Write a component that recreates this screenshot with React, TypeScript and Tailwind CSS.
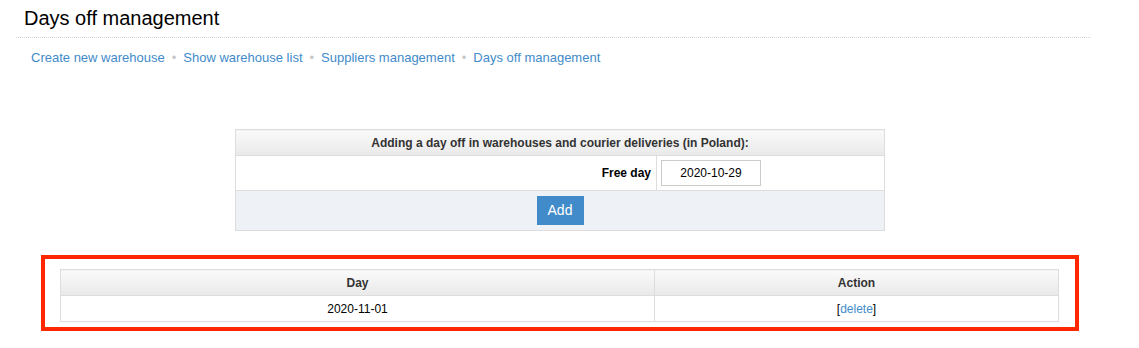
const links = ["Create new warehouse", "Show warehouse list", "Suppliers management", "Days off management"];

const App = () => {
  return (
    <div className="min-h-screen bg-white px-4 font-['Liberation_Sans',Arial,sans-serif] text-[#222]">
      {/* Title */}
      <div className="h-[38px] border-b border-dotted border-[#d4d4d4] pl-2 pt-[7px] w-[1075px]">
        <h1 className="text-[20px] leading-[22px] font-normal text-black">Days off management</h1>
      </div>

      {/* Breadcrumb nav */}
      <nav className="mt-[11px] pl-[15px] flex items-center text-[13px] leading-[18px]">
        {links.map((l, i) => (
          <span key={l} className="flex items-center">
            {i > 0 && <span className="mx-[7px] text-[#c8c8c8]">•</span>}
            <a href="#" className="text-[#428bca]">{l}</a>
          </span>
        ))}
      </nav>

      {/* Add day off form */}
      <table className="mt-[62px] ml-[219px] w-[650px] border-collapse border border-[#dddddd] text-[12px]">
        <thead>
          <tr>
            <th colSpan={2} className="h-[26px] border border-[#dddddd] bg-linear-to-b from-[#fafafa] to-[#e9e9e9] font-bold text-[#333] text-center">
              Adding a day off in warehouses and courier deliveries (in Poland):
            </th>
          </tr>
        </thead>
        <tbody>
          <tr>
            <td className="w-[421px] h-[35px] border border-[#dddddd] pr-[5px] text-right font-bold text-black">Free day</td>
            <td className="border border-[#dddddd] pl-[4px]">
              <input
                readOnly
                value="2020-10-29"
                className="w-[100px] h-[26px] border border-[#cccccc] text-center text-[12px] text-black outline-none"
              />
            </td>
          </tr>
          <tr>
            <td colSpan={2} className="h-[40px] border border-[#dddddd] bg-[#eef1f5] text-center">
              <button className="w-[47px] h-[29px] bg-[#428bca] text-white text-[14px] align-middle">Add</button>
            </td>
          </tr>
        </tbody>
      </table>

      {/* Days off list */}
      <div className="mt-[24px] ml-[25px] w-[1038px] border-[4px] border-[#ff2600] px-[15px] pt-[10px] pb-[5px]">
        <table className="w-[999px] border-collapse border border-[#dddddd] text-[12px]">
          <thead>
            <tr>
              <th className="w-[594px] h-[26px] border border-[#dddddd] bg-linear-to-b from-[#fafafa] to-[#e9e9e9] font-bold text-[#333]">Day</th>
              <th className="h-[26px] border border-[#dddddd] bg-linear-to-b from-[#fafafa] to-[#e9e9e9] font-bold text-[#333]">Action</th>
            </tr>
          </thead>
          <tbody>
            <tr>
              <td className="h-[26px] border border-[#dddddd] text-center text-black">2020-11-01</td>
              <td className="h-[26px] border border-[#dddddd] text-center text-black">
                [<a href="#" className="text-[#428bca]">delete</a>]
              </td>
            </tr>
          </tbody>
        </table>
      </div>
    </div>
  );
};

export default App;
